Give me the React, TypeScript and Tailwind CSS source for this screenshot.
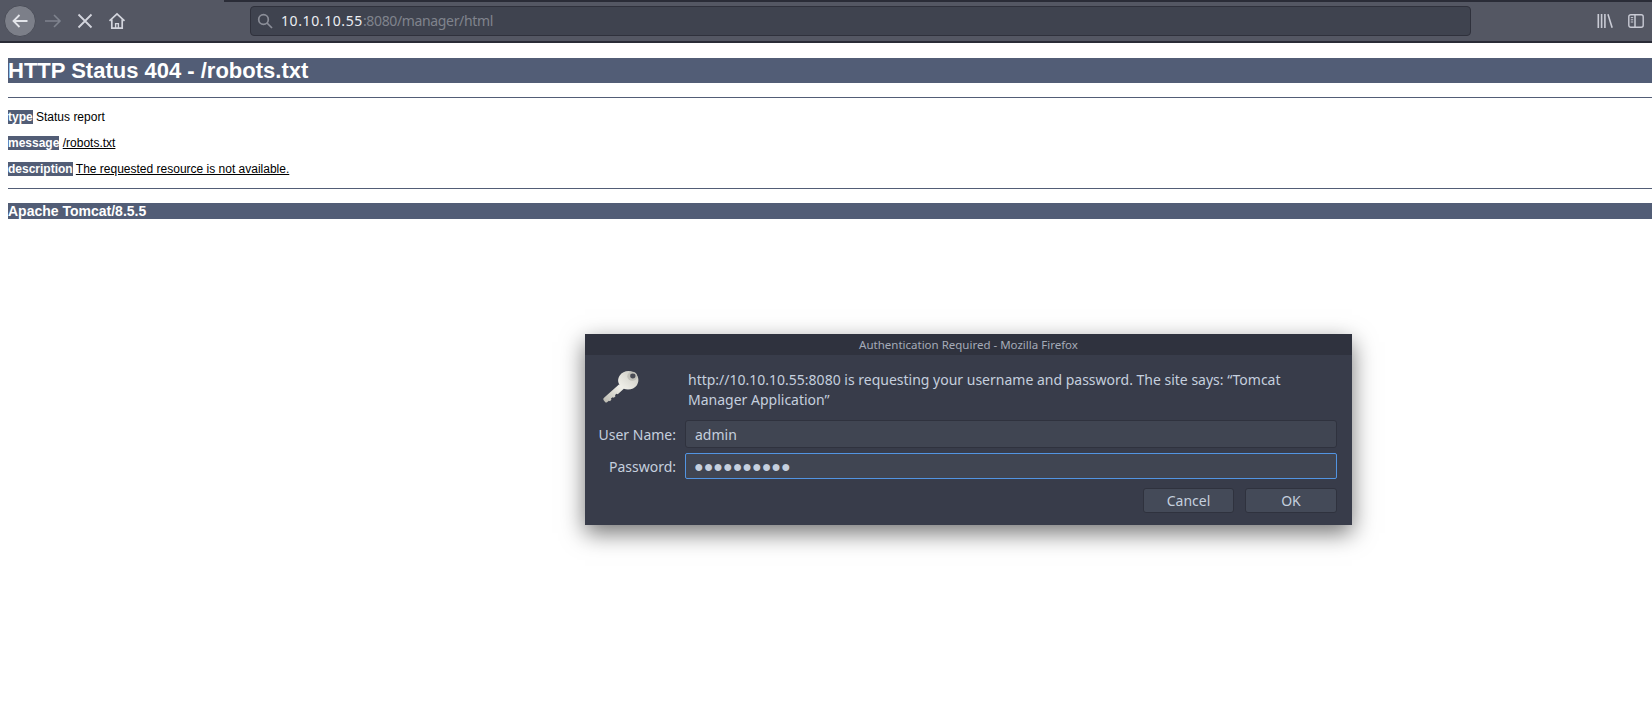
import React from "react";

const BackIcon = () => (
  <svg width="18" height="18" viewBox="0 0 18 18" fill="none" stroke="#e3e5ea" strokeWidth="1.8">
    <path d="M16.5 9H2.5M8.5 3L2.5 9l6 6" />
  </svg>
);

const ForwardIcon = () => (
  <svg width="18" height="18" viewBox="0 0 18 18" fill="none" stroke="#7f838e" strokeWidth="1.6">
    <path d="M1 9h15M10 3l6 6-6 6" />
  </svg>
);

const StopIcon = () => (
  <svg width="16" height="16" viewBox="0 0 16 16" fill="none" stroke="#d3d5dd" strokeWidth="1.8">
    <path d="M1.5 1.5l13 13M14.5 1.5l-13 13" />
  </svg>
);

const HomeIcon = () => (
  <svg width="18" height="18" viewBox="0 0 18 18" fill="none" stroke="#d3d5dd" strokeWidth="1.7">
    <path d="M1.5 8.8L9 1.8l7.5 7M3.8 7.5v8.7h10.4V7.5" />
    <path d="M7.6 16.2v-4.6h2.8v4.6" strokeWidth="1.4" />
  </svg>
);

const SearchIcon = () => (
  <svg width="16" height="16" viewBox="0 0 16 16" fill="none" stroke="#8b8e98" strokeWidth="1.7">
    <circle cx="6.5" cy="6.5" r="4.8" />
    <path d="M10 10l5 5" />
  </svg>
);

const LibraryIcon = () => (
  <svg width="16" height="16" viewBox="0 0 16 16" fill="#c9cbd5">
    <rect x="0.5" y="1" width="1.6" height="14" />
    <rect x="3.8" y="1" width="1.6" height="14" />
    <rect x="7.1" y="1" width="1.6" height="14" />
    <path d="M10.2 1.4l1.5-.5 4.2 13.6-1.5.5z" />
  </svg>
);

const SidebarIcon = () => (
  <svg width="16" height="16" viewBox="0 0 16 16" fill="none" stroke="#c9cbd5" strokeWidth="1.4">
    <rect x="0.8" y="1.7" width="14.4" height="12.6" rx="2" />
    <path d="M7 1.7v12.6" strokeWidth="1.5" />
    <path d="M2.8 4.6h2.4M2.8 6.8h2.4M2.8 9h2.4" strokeWidth="1" />
  </svg>
);

const KeyIcon = () => (
  <svg width="44" height="40" viewBox="0 0 38 38" preserveAspectRatio="none">
    <defs>
      <linearGradient id="keyGrad" x1="0" y1="1" x2="1" y2="0">
        <stop offset="0" stopColor="#b9b8ae" />
        <stop offset="0.5" stopColor="#f0efe9" />
        <stop offset="1" stopColor="#c8c7bf" />
      </linearGradient>
    </defs>
    <path
      fill="url(#keyGrad)"
      d="M15.5 17.5L2.6 30.2c-.7.7-.8 1.6-.3 2.3l1.2 1.7c.5.6 1.2.6 1.7.2l1.6-1.4 1 .5 1.2-1.6-.4-1.1 1.5-1.2 1 .6 1.4-1.5-.4-1.2 1.4-1.2 1 .5 5.2-5.2c4.2 1.5 9 .3 11.3-3.4 2.6-4.3 1.3-9.8-2.9-12.2-4.2-2.5-9.4-1.1-11.9 3-2.1 3.3-1.7 6.9.3 9.5z"
    />
    <circle cx="27" cy="9.8" r="4.3" fill="#c2c1ba" />
    <circle cx="27.5" cy="9.5" r="2.3" fill="#4a4c55" />
  </svg>
);

const App = () => {
  return (
    <div className="relative h-[702px] w-[1652px] overflow-hidden bg-white font-['Liberation_Sans',sans-serif] text-black">
      <div className="flex h-[43px] items-center border-b-2 border-[#2a2c37] bg-[#545763] relative">
        <div className="absolute right-0 top-0 h-[2px] w-[1428px] bg-[#2a2c37]" />
        <div className="ml-1 flex h-8 w-8 items-center justify-center rounded-full border border-[#4b4e59] bg-[#7c7f89]">
          <BackIcon />
        </div>
        <div className="ml-[8px]">
          <ForwardIcon />
        </div>
        <div className="ml-[15px]">
          <StopIcon />
        </div>
        <div className="ml-[15px]">
          <HomeIcon />
        </div>
        <div className="ml-[124px] flex h-[30px] w-[1221px] items-center rounded-[4px] border border-[#2f313c] bg-[#3f434f] pl-[6px] font-['Noto_Sans',sans-serif] text-[14px]">
          <SearchIcon />
          <span className="ml-[8px] tracking-[0.6px] text-[#eceef2]">10.10.10.55</span>
          <span className="tracking-[-0.35px] text-[#80838d]">:8080/manager/html</span>
        </div>
        <div className="ml-[126px]">
          <LibraryIcon />
        </div>
        <div className="ml-[15px]">
          <SidebarIcon />
        </div>
      </div>

      <div className="pl-2">
        <h1 className="mt-[15px] h-[25px] bg-[#525d76] text-[22px] font-bold leading-[25px] text-white">
          HTTP Status 404 - /robots.txt
        </h1>
        <div className="mt-[14px] h-px bg-[#525d76]" />
        <p className="mt-[12px] h-[14px] text-xs leading-[14px]">
          <b className="bg-[#525d76] text-white">type</b> Status report
        </p>
        <p className="mt-[12px] h-[14px] text-xs leading-[14px]">
          <b className="bg-[#525d76] text-white">message</b> <u>/robots.txt</u>
        </p>
        <p className="mt-[12px] h-[14px] text-xs leading-[14px]">
          <b className="bg-[#525d76] text-white">description</b> <u>The requested resource is not available.</u>
        </p>
        <div className="mt-[12px] h-px bg-[#525d76]" />
        <h3 className="mt-[14px] h-4 bg-[#525d76] text-sm font-bold leading-4 text-white">Apache Tomcat/8.5.5</h3>
      </div>

      <div className="absolute left-[585px] top-[334px] flex h-[191px] w-[767px] flex-col bg-[#383c4a] font-['Noto_Sans',sans-serif] text-[#c5cfde] shadow-[0_8px_22px_rgba(0,0,0,0.55)]">
        <div className="flex h-[21px] items-center justify-center bg-[#2f323e] text-[11.5px] text-[#a5abb8]">
          Authentication Required - Mozilla Firefox
        </div>
        <div className="flex pl-4 pr-[15px] pt-[11px]">
          <KeyIcon />
          <p className="ml-[43px] mt-[4px] text-[14px] leading-[20px]">
            http://10.10.10.55:8080 is requesting your username and password. The site says: “Tomcat
            <br />
            Manager Application”
          </p>
        </div>
        <div className="mt-[10px] grid grid-cols-[86px_652px] items-center gap-x-[9px] gap-y-[5px] pl-[5px] text-[14px]">
          <label className="text-right">User Name:</label>
          <div className="flex h-[28px] items-center rounded-[3px] border border-[#2f323e] bg-[#404552] px-[9px]">admin</div>
          <label className="text-right">Password:</label>
          <div className="flex h-[26px] items-center rounded-[2px] border border-[#5294e2] bg-[#404552] px-[8px]">
            <span className="text-[16px] leading-[20px]">●●●●●●●●●●</span>
          </div>
        </div>
        <div className="mt-[9px] flex justify-end gap-[11px] pr-[15px] text-[14px]">
          <button className="h-[25px] w-[91px] rounded-[3px] border border-[#2f323e] bg-[#444a58] text-[#c5cfde]">Cancel</button>
          <button className="h-[25px] w-[92px] rounded-[3px] border border-[#2f323e] bg-[#444a58] text-[#c5cfde]">OK</button>
        </div>
      </div>
    </div>
  );
};

export default App;
